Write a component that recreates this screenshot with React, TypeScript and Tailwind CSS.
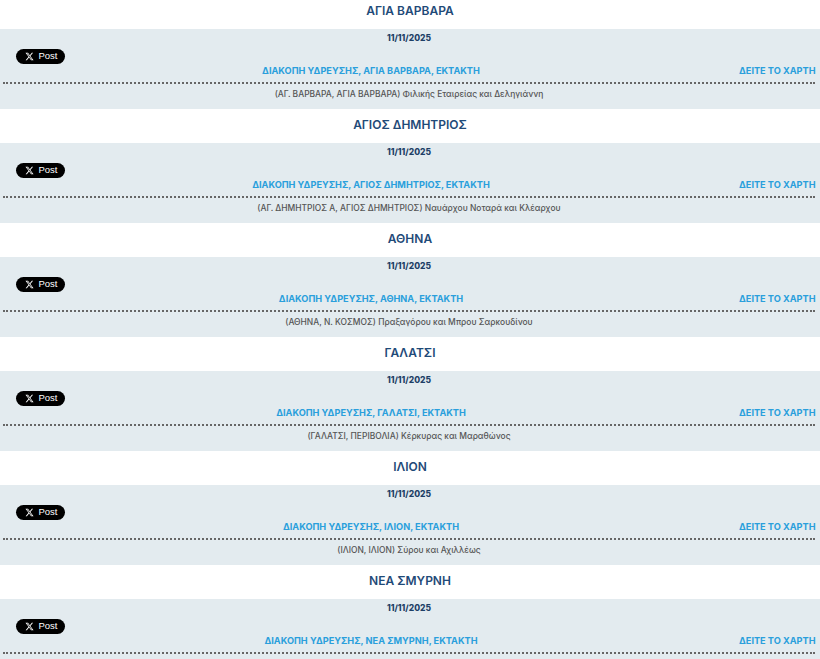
import React from 'react';

interface Outage {
  area: string;
  detail?: string;
}

const outages: Outage[] = [
  { area: 'ΑΓΙΑ ΒΑΡΒΑΡΑ', detail: '(ΑΓ. ΒΑΡΒΑΡΑ, ΑΓΙΑ ΒΑΡΒΑΡΑ) Φιλικής Εταιρείας και Δεληγιάννη' },
  { area: 'ΑΓΙΟΣ ΔΗΜΗΤΡΙΟΣ', detail: '(ΑΓ. ΔΗΜΗΤΡΙΟΣ Α, ΑΓΙΟΣ ΔΗΜΗΤΡΙΟΣ) Ναυάρχου Νοταρά και Κλέαρχου' },
  { area: 'ΑΘΗΝΑ', detail: '(ΑΘΗΝΑ, Ν. ΚΟΣΜΟΣ) Πραξαγόρου και Μπρου Σαρκουδίνου' },
  { area: 'ΓΑΛΑΤΣΙ', detail: '(ΓΑΛΑΤΣΙ, ΠΕΡΙΒΟΛΙΑ) Κέρκυρας και Μαραθώνος' },
  { area: 'ΙΛΙΟΝ', detail: '(ΙΛΙΟΝ, ΙΛΙΟΝ) Σύρου και Αχιλλέως' },
  { area: 'ΝΕΑ ΣΜΥΡΝΗ' },
];

function XPostButton() {
  return (
    <button className="col-start-1 row-start-2 justify-self-start ml-[13px] mt-[5px] flex h-[15px] w-[49px] items-center justify-center gap-[4px] rounded-full bg-black pl-[2px] text-[9.5px] font-medium text-white font-['Liberation_Sans',sans-serif]">
      <svg viewBox="0 0 24 24" className="h-[9px] w-[9px] fill-current">
        <path d="M18.244 2.25h3.308l-7.227 8.26 8.502 11.24H16.17l-5.214-6.817L4.99 21.75H1.68l7.73-8.835L1.254 2.25H8.08l4.713 6.231zm-1.161 17.52h1.833L7.084 4.126H5.117z" />
      </svg>
      Post
    </button>
  );
}

function OutageRow({ area, detail }: Outage) {
  return (
    <section>
      <h2 className="flex h-[34px] items-center justify-center pb-[3px] text-[12px] font-semibold text-[#1f4a78]">
        {area}
      </h2>
      <div className="h-[80px] bg-[#e3ebef] pl-[3px] pr-[5px] pt-[3px]">
        <div className="grid h-[52px] grid-cols-[1fr_76px] grid-rows-[12px_1fr] border-b-2 border-dotted border-[#666] pb-[5px]">
          <div className="col-span-2 text-center text-[8.5px] font-extrabold leading-[12px] text-[#1d3f66]">
            11/11/2025
          </div>
          <XPostButton />
          <a className="col-start-1 row-start-2 self-end text-center text-[9.2px] font-bold leading-[12px] text-[#2a9fdc]">
            ΔΙΑΚΟΠΗ ΥΔΡΕΥΣΗΣ, {area}, ΕΚΤΑΚΤΗ
          </a>
          <a className="col-start-2 row-start-2 self-end whitespace-nowrap text-right text-[9.2px] font-bold leading-[12px] text-[#2a9fdc]">
            ΔΕΙΤΕ ΤΟ ΧΑΡΤΗ
          </a>
        </div>
        {detail && (
          <p className="mt-[4px] text-center text-[8.45px] font-medium leading-[12px] text-[#555]">{detail}</p>
        )}
      </div>
    </section>
  );
}

export default function App() {
  return (
    <div className="h-[659px] overflow-hidden bg-white font-['Inter',sans-serif]">
      <div className="-mt-[5px]">
        {outages.map((o) => (
          <OutageRow key={o.area} {...o} />
        ))}
      </div>
    </div>
  );
}
